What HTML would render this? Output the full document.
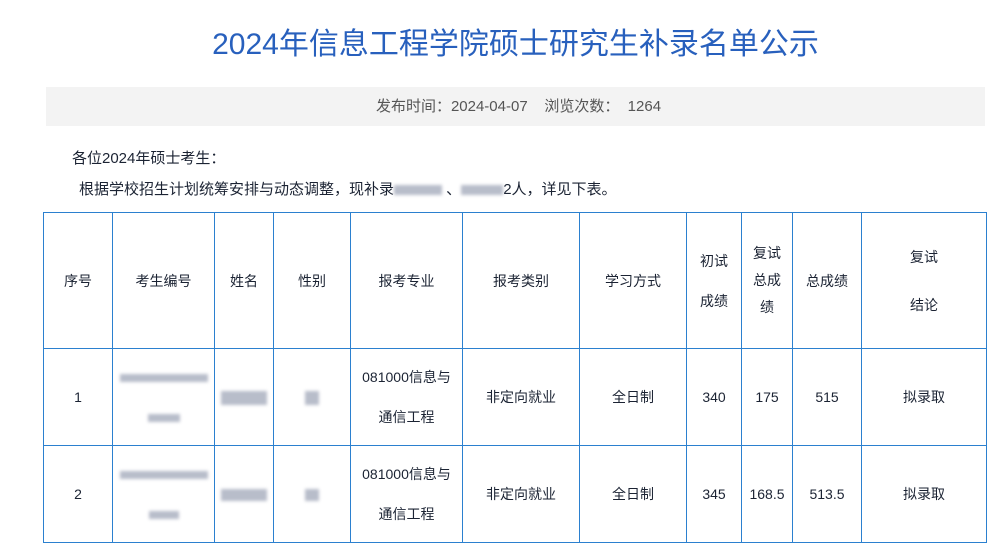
<!DOCTYPE html>
<html><head><meta charset="utf-8"><style>
*{margin:0;padding:0;box-sizing:border-box}
body{width:1006px;height:555px;overflow:hidden;background:#fff;font-family:"Liberation Sans","Noto Sans CJK SC",sans-serif;color:#1b2333;position:relative}
h1{position:absolute;left:0;width:1031px;top:25px;text-align:center;font-size:30px;font-weight:normal;color:#2860bd;line-height:40px}
.bar{position:absolute;left:46px;top:87px;width:939px;height:39px;background:#f3f3f3;text-align:center;font-size:15px;line-height:39px;color:#555;padding-left:6px}
.p{position:absolute;font-size:15px;line-height:20px}
.blur{display:inline-block;background:#b8bdca;filter:blur(1.5px);vertical-align:middle}
table{position:absolute;left:43px;top:212px;border-collapse:collapse;table-layout:fixed}
td{border:1.5px solid #2b80cf;text-align:center;font-size:14px;line-height:20px;padding:0}
</style></head><body>
<h1>2024年信息工程学院硕士研究生补录名单公示</h1>
<div class="bar">发布时间：2024-04-07&nbsp;&nbsp;&nbsp;&nbsp;浏览次数：&nbsp;&nbsp;1264</div>
<div class="p" style="left:72px;top:149px">各位2024年硕士考生：</div>
<div class="p" style="left:79px;top:180px">根据学校招生计划统筹安排与动态调整，现补录<span class="blur" style="width:48px;height:10px"></span> 、<span class="blur" style="width:42px;height:10px"></span>2人，详见下表。</div>
<table>
<colgroup><col style="width:69px"><col style="width:102px"><col style="width:59px"><col style="width:77px"><col style="width:112px"><col style="width:117px"><col style="width:107px"><col style="width:55px"><col style="width:51px"><col style="width:69px"><col style="width:125px"></colgroup>
<tr style="height:136px"><td>序号</td><td>考生编号</td><td>姓名</td><td>性别</td><td>报考专业</td><td>报考类别</td><td>学习方式</td><td style="line-height:40px">初试<br>成绩</td><td style="line-height:27px">复试<br>总成<br>绩</td><td>总成绩</td><td style="line-height:48px">复试<br>结论</td></tr>
<tr style="height:97px"><td>1</td><td><span class="blur" style="width:88px;height:8px"></span><br><br><span class="blur" style="width:32px;height:8px"></span></td><td><span class="blur" style="width:46px;height:14px"></span></td><td><span class="blur" style="width:14px;height:14px"></span></td><td style="line-height:40px">081000信息与<br>通信工程</td><td>非定向就业</td><td>全日制</td><td>340</td><td>175</td><td>515</td><td>拟录取</td></tr>
<tr style="height:97px"><td>2</td><td><span class="blur" style="width:88px;height:8px"></span><br><br><span class="blur" style="width:30px;height:8px"></span></td><td><span class="blur" style="width:46px;height:12px"></span></td><td><span class="blur" style="width:14px;height:12px"></span></td><td style="line-height:40px">081000信息与<br>通信工程</td><td>非定向就业</td><td>全日制</td><td>345</td><td>168.5</td><td>513.5</td><td>拟录取</td></tr>
</table>
</body></html>
